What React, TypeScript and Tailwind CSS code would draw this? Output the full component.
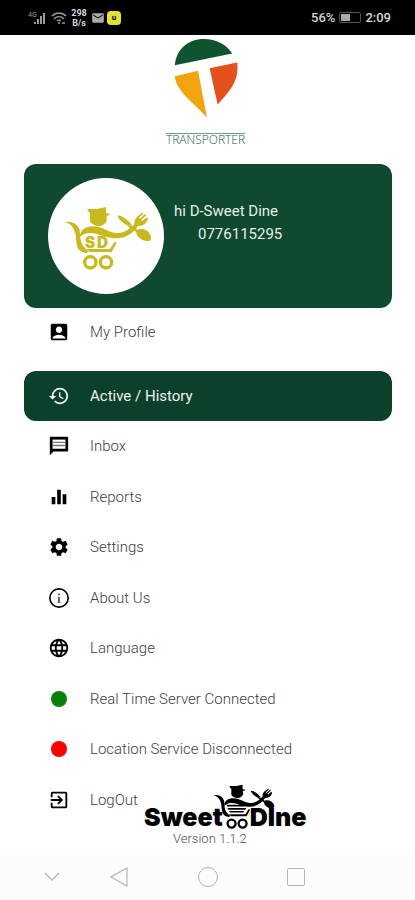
import type { ReactNode } from "react";
import {
  MdAccountBox,
  MdHistory,
  MdEqualizer,
  MdSettings,
  MdLanguage,
  MdExitToApp,
  MdEmail,
} from "react-icons/md";

function TransporterMark() {
  return (
    <svg viewBox="72 25 192 238" className="h-[79px] w-16" aria-hidden="true">
      <path d="M74 104C78 54 116 25 161 25c38 0 69 17 86 44Z" fill="#0d542f" />
      <path d="M74 137l70-16 27 142C143 223 80 190 74 137Z" fill="#f3a30c" />
      <path d="M179 113l83-17c6 55-19 82-59 126Z" fill="#e5501b" />
    </svg>
  );
}

function ChefCart({ className, lettered }: { className: string; lettered?: boolean }) {
  return (
    <svg viewBox="76 110 264 192" className={className} fill="currentColor" aria-hidden="true">
      <path d="M145 119h30l27-6v18l11 3v4l-9 1v16c-5 9-12 14-24 16-12-2-19-6-26-14v-26l-5-5Z" />
      <path d="M78 158c20-4 40 5 45 24 2 10 1 20 3 31 3 14 11 22 24 33l-6 5c-15-3-26-9-29-22-4-17-1-33-9-48-6-12-14-20-28-23Z" />
      <path d="M124 196c4-16 19-25 38-25 30 0 47 20 74 20 22 0 38-12 55-31l9 8c-19 26-40 39-66 39-34 0-57-18-83-16-12 1-20 5-26 12Z" />
      <path d="M236 139c14-2 30 14 42 25l-8 7c-14-9-28-17-34-32Z" />
      <path d="M276 166l20 15c16-6 34 2 40 18 4 10-1 17-12 16-18-3-29-13-32-28l-24-15Z" />
      <path d="M287 166c-1-13 4-22 15-29l10-8 2 4-13 12 3 3 15-14 4 3-15 15 3 3 14-12 3 5c-5 14-14 22-30 22Z" />
      <path d="M144 239h70l14-22 6 3-15 28h-66Z" />
      {lettered ? (
        <g fontSize="46" fontWeight="900" fontFamily="Inter, 'Liberation Sans', sans-serif">
          <text x="139" y="235">S</text>
          <text x="175" y="235">D</text>
        </g>
      ) : (
        <path d="M134 199h72l8 7h-78ZM137 212h80l-3 8h-72ZM143 225h66l-4 7h-56Z" />
      )}
      <circle cx="155" cy="279" r="17" fill="none" stroke="currentColor" strokeWidth="10" />
      <circle cx="202" cy="279" r="17" fill="none" stroke="currentColor" strokeWidth="10" />
    </svg>
  );
}

function InboxIcon() {
  return (
    <svg viewBox="0 0 24 24" className="size-[22px]" aria-hidden="true">
      <path d="M2 22V3q0-1 1-1h18q1 0 1 1v14q0 1-1 1H6Z" fill="currentColor" />
      <path d="M5 5h14v10H5Z" fill="#ffffff" />
      <path d="M5 8h14M5 11.5h14" stroke="#777777" strokeWidth="1.5" />
    </svg>
  );
}

function AboutIcon() {
  return (
    <svg viewBox="0 0 24 24" className="size-[22px]" fill="none" stroke="currentColor" aria-hidden="true">
      <circle cx="12" cy="12" r="10" strokeWidth="1.8" />
      <path d="M12 7v2M12 11v6" strokeWidth="2" stroke="#555555" />
      <path d="M10.5 11H12M10 17h4" strokeWidth="1" stroke="#777777" />
    </svg>
  );
}

function MenuRow({ icon, label, className }: { icon: ReactNode; label: string; className: string }) {
  return (
    <button type="button" className={`flex w-full items-center text-left text-[15px] ${className}`}>
      <span className="ml-6 flex w-[22px] justify-center text-[22px]">{icon}</span>
      <span className="ml-5">{label}</span>
    </button>
  );
}

function Dot({ className }: { className: string }) {
  return <span className={`block size-4 rounded-full ${className}`} />;
}

const items = [
  { label: "Inbox", icon: <InboxIcon /> },
  { label: "Reports", icon: <MdEqualizer /> },
  { label: "Settings", icon: <MdSettings /> },
  { label: "About Us", icon: <AboutIcon /> },
  { label: "Language", icon: <MdLanguage /> },
  { label: "Real Time Server Connected", icon: <Dot className="bg-[#078207]" /> },
  { label: "Location Service Disconnected", icon: <Dot className="bg-[#ff0000]" /> },
  { label: "LogOut", icon: <MdExitToApp /> },
];

function StatusBar() {
  return (
    <header className="flex h-[35px] items-center bg-black pr-6 pl-7 text-[#d5d5d5]">
      <svg viewBox="0 0 19 16" className="h-4 w-[19px]" fill="#999999" aria-hidden="true">
        <text x="0" y="7" fontSize="7" fontFamily="Roboto, sans-serif">4G</text>
        <path d="M6 12h2v2H6zM9 9h2v5H9zM12 6h2v8h-2zM15 3h2v11h-2z" />
      </svg>
      <svg viewBox="0 0 16 14" className="ml-1 h-3.5 w-4" fill="none" stroke="#999999" strokeWidth="1.5" aria-hidden="true">
        <path d="M1 5c4-4 10-4 14 0M3 8c3-3 7-3 10 0M6 10c1-1 3-1 4 0" />
        <path d="M7 12h2M11 12h3" />
      </svg>
      <span className="ml-1 w-4 text-center text-[9px] leading-[10px] font-bold">
        298
        <br />
        B/s
      </span>
      <MdEmail className="ml-1 size-3.5 text-[#aaaaaa]" />
      <span className="ml-0.5 flex size-3.5 items-center justify-center rounded bg-[#dfe52b] text-[8px] font-bold text-black">
        u
      </span>
      <span className="ml-auto text-[13px] font-medium">56%</span>
      <span className="ml-1 flex h-[11px] w-[22px] rounded-xs border border-[#555555] p-px">
        <span className="w-1/2 bg-[#aaaaaa]" />
      </span>
      <span className="ml-1 text-[13px] font-medium">2:09</span>
    </header>
  );
}

export default function App() {
  return (
    <div className="relative flex min-h-screen flex-col bg-white font-['Roboto','Liberation_Sans',sans-serif] text-[#404040]">
      <StatusBar />
      <div className="flex h-[129px] flex-col items-center pt-1 pr-1">
        <TransporterMark />
        <p className="mt-[15px] border-t border-[#6c9c89] font-['Open_Sans',sans-serif] text-[12px] leading-3 font-light text-[#1c5b43]">
          TRANSPORTER
        </p>
      </div>

      <main className="flex flex-col pr-[23px] pl-6">
        <section className="flex h-36 rounded-xl bg-[#0e4930] pl-6 text-[15px] text-[#e7eee9]">
          <div className="mt-3.5 flex size-[116px] shrink-0 items-center justify-center rounded-full bg-white pt-1 pl-1 text-[#c9b91c]">
            <ChefCart lettered className="h-16 w-[88px]" />
          </div>
          <div className="mt-9 ml-2.5 leading-[23px]">
            <p>hi D-Sweet Dine</p>
            <p className="pl-6">0776115295</p>
          </div>
        </section>

        <nav className="flex flex-col">
          <MenuRow
            icon={<MdAccountBox className="text-black" />}
            label="My Profile"
            className="h-12 font-light"
          />
          <MenuRow
            icon={<MdHistory />}
            label="Active / History"
            className="mt-[15px] h-[50px] rounded-xl bg-[#0b402a] text-[#edf3ef]"
          />
          <div className="flex min-h-[404px] flex-col">
            {items.map((item) => (
              <MenuRow
                key={item.label}
                icon={<span className="text-black">{item.icon}</span>}
                label={item.label}
                className="flex-1 font-light"
              />
            ))}
          </div>
        </nav>
      </main>

      <div className="absolute bottom-[53px] left-36 flex flex-col text-black">
        <div className="flex items-end font-['Inter','Liberation_Sans',sans-serif] text-[25px] leading-6 font-black">
          <span>Sweet</span>
          <ChefCart className="-mr-[25px] -ml-[10px] h-[45px] w-[62px]" />
          <span>DIne</span>
        </div>
        <p className="mt-0.5 ml-[29px] text-[13px] leading-4 font-light text-[#505050]">Version 1.1.2</p>
      </div>

      <footer className="mt-auto flex h-[46px] items-center bg-[#fcfcfc] text-[#b5b5b5]">
        <button type="button" aria-label="Hide" className="ml-11">
          <svg viewBox="0 0 16 10" className="h-2.5 w-4" fill="none" stroke="currentColor" strokeWidth="1.3">
            <path d="M1 1l7 7 7-7" />
          </svg>
        </button>
        <button type="button" aria-label="Back" className="ml-[50px]">
          <svg viewBox="0 0 18 20" className="h-5 w-[18px]" fill="none" stroke="currentColor" strokeWidth="1.2">
            <path d="M17 1v18L1 10Z" />
          </svg>
        </button>
        <button type="button" aria-label="Home" className="ml-[70px]">
          <span className="block size-5 rounded-full border border-current" />
        </button>
        <button type="button" aria-label="Recent" className="ml-[69px]">
          <span className="block size-[18px] rounded-xs border border-current" />
        </button>
      </footer>
    </div>
  );
}
